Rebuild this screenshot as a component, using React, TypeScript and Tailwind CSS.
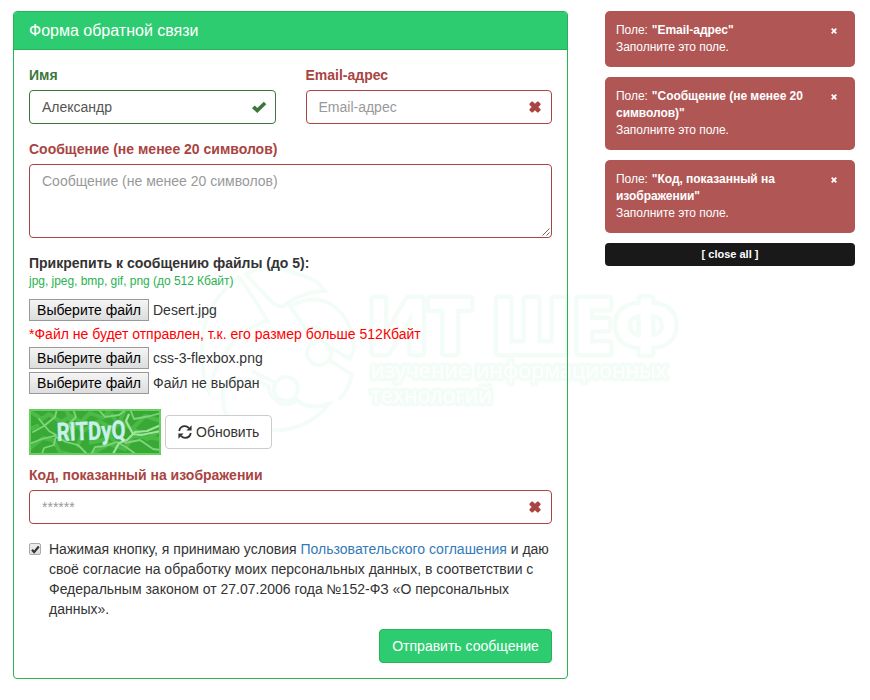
import type { ReactNode } from "react";

const CheckMark = () => (
  <svg className="h-[12px] w-[16px]" viewBox="0 0 16 12">
    <path d="M1 7.3 3.7 4.6 6.3 7.1 12.8.8 15.3 3.2 6.3 11.9Z" fill="#3c763d" />
  </svg>
);

const Cross = ({ className }: { className: string }) => (
  <svg className={className} viewBox="0 0 12 12">
    <path
      d="M2.7.4h1L6 2.7 8.3.4h1l2.3 2.3v1L9.3 6l2.3 2.3v1l-2.3 2.3h-1L6 9.3l-2.3 2.3h-1L.4 9.3v-1L2.7 6 .4 3.7v-1Z"
      fill="currentColor"
    />
  </svg>
);

const Refresh = () => (
  <svg className="h-[14px] w-[14px]" viewBox="0 0 14 14" fill="none" stroke="#333" strokeWidth="1.8">
    <path d="M1.2 6C1.8 3.1 4 1.2 6.8 1.2c1.7 0 3.1.7 4.2 1.9" />
    <path d="M12.8 8c-.6 2.9-2.8 4.8-5.6 4.8-1.7 0-3.1-.7-4.2-1.9" />
    <path d="M13.6.2v5.2H8.4ZM.4 13.8V8.6h5.2Z" fill="#333" stroke="none" />
  </svg>
);

const Captcha = () => (
  <svg className="h-[46px] w-[132px] shrink-0" viewBox="0 0 132 46">
    <defs>
      <filter id="soft">
        <feGaussianBlur stdDeviation=".6" />
      </filter>
    </defs>
    <rect width="132" height="46" fill="#38a935" />
    <g fill="none" strokeLinejoin="round" filter="url(#soft)">
      <g stroke="#56c251" strokeWidth="4" opacity=".7">
        <path d="M0 2 13 10 20 5 32 13 42 7 52 13 61 4 74 9 82 0M0 40 14 29 24 31 31 43 43 46M96 0 91 12 103 20 116 7 132 12M62 45 80 35 96 40 104 27 132 30M37 0 45 20 34 32M82 4 89 16 78 24 86 33" />
        <path d="M45 14 54 22 70 12 84 20 78 30 60 34M104 20 118 30 130 22M48 38 52 28M2 20 10 16" />
      </g>
      <g stroke="#80d57b" strokeWidth="1.8" strokeLinecap="round">
        <path d="M10 10 20 22 27 26 25 36 15 39 13 45M0 35 13 30 25 27 37 33 49 36 58 45M28 0 26 8 15 17 4 23M44 0 47 8 40 15 43 24M69 0 76 8 90 6 98 0M101 0 105 10 121 7 132 4M96 34 111 31 124 40 132 41M76 37 88 33 97 38 108 46M62 46 66 38 76 37" />
      </g>
      <path d="M132 16 118 22 106 23 98 31 90 34 84 45M132 22 112 26 104 25 97 12 100 5" stroke="#a0e49c" strokeWidth="2.2" />
      <path d="M1 1h130v44H1Z" stroke="#67cf62" strokeWidth="2" />
    </g>
    <text transform="translate(28 32) rotate(-2) scale(.83 1.27)" fill="#c8f0ec" stroke="#c8f0ec" strokeWidth=".3" className="font-['Roboto',sans-serif] text-[20px] font-bold" textLength="83" lengthAdjust="spacingAndGlyphs">RITDyQ</text>
  </svg>
);

/* Faint logo behind the form and the page around it. */
const Watermark = () => (
  <svg className="pointer-events-none absolute top-[260px] left-[190px] -z-10 h-[190px] w-[510px]" viewBox="190 260 510 190" fill="none" stroke="#effcf5" strokeWidth="4" opacity=".7">
    <path d="M239 277c-20 15-34 35-36 60-2 22-1 40 6 55 4-22 14-40 29-54 10-9 20-15 29-17-6-13-15-25-28-44Z" />
    <path d="M246 274c14-8 30-7 42-3 17 5 29 8 37 20-16 1-31 6-41 15-5 2-10-2-14-6-7-8-17-17-24-26Z" />
    <path d="M290 306c16-8 32-9 44 0 13 10 19 24 20 43l-4 10-24-14c1-16-10-20-20-15-5-9-10-15-16-24Z" />
    <path d="M224 383c-3 17 0 32 8 43 14 5 31 5 50 4 22-3 36-12 47-26-13 4-25 3-32-4-7 6-16 5-21 0-6-5-8-9-7-14-12-6-29-10-45-3Z" />
    <circle cx="319" cy="353" r="12" />
    <circle cx="286" cy="389" r="12" />
    <path d="m330 361 22 13c-2 10-6 18-13 26M276 383l-24-12" />
    <g strokeWidth="9" strokeLinejoin="round" className="font-['Open_Sans',sans-serif] font-bold">
      <text x="367" y="353" fontSize="76" textLength="311" lengthAdjust="spacingAndGlyphs" fill="#fff" style={{ paintOrder: "stroke" }}>ИТ ШЕФ</text>
    </g>
    <g strokeWidth="7" strokeLinejoin="round" fill="#fff" className="font-['Open_Sans',sans-serif]" style={{ paintOrder: "stroke" }}>
      <text x="371" y="378" fontSize="22" textLength="296" lengthAdjust="spacingAndGlyphs">изучение информационных</text>
      <text x="371" y="403" fontSize="22" textLength="121" lengthAdjust="spacingAndGlyphs">технологий</text>
    </g>
  </svg>
);

const Label = ({ children, good }: { children: ReactNode; good?: boolean }) => (
  <div className={`mb-[5px] h-5 font-bold ${good ? "text-[#3c763d]" : "text-[#a94442]"}`}>{children}</div>
);

const Field = ({ children, good }: { children: ReactNode; good?: boolean }) => (
  <div className={`flex h-[34px] items-center justify-between rounded-[4px] border pl-3 ${good ? "border-[#3c763d] pr-[8px] text-[#555]" : "border-[#a94442] pr-[10px] text-[#999]"}`}>
    {children}
    {good ? <CheckMark /> : <Cross className="h-3 w-3 text-[#a94442]" />}
  </div>
);

const FileRow = ({ name }: { name: string }) => (
  <div className="flex h-[22px] items-center gap-1">
    <button className="h-[22px] w-[120px] border border-[#999] bg-linear-to-b from-[#f5f5f5] to-[#dddddd] whitespace-nowrap text-black">Выберите файл</button>
    <span>{name}</span>
  </div>
);

const Notice = ({ lines }: { lines: string[] }) => (
  <div className="flex justify-between rounded-[5px] bg-[#b05655] pt-[11px] pr-[18px] pb-[11px] pl-[11px] text-[12px] leading-[17px] tracking-[-0.04px] text-white">
    <div className="flex flex-col whitespace-nowrap">
      <div className="flex gap-1">
        <span>Поле:</span>
        <b>{lines[0]}</b>
      </div>
      {lines[1] && <b>{lines[1]}</b>}
      <span>Заполните это поле.</span>
    </div>
    <svg className="mt-[6px] h-[6px] w-[6px]" viewBox="0 0 6 6">
      <path d="m.7.7 4.6 4.6M5.3.7.7 5.3" stroke="#fff" strokeWidth="1.7" />
    </svg>
  </div>
);

export default function App() {
  return (
    <div className="relative isolate flex h-[700px] w-[870px] items-start gap-[37px] overflow-hidden bg-white pt-[11px] pl-[13px] font-['Liberation_Sans',Arial,sans-serif] text-[14px] leading-5 text-[#333]">
      <Watermark />
      <main className="h-[668px] w-[555px] shrink-0 rounded-[4px] border border-[#28b351]">
        <h1 className="flex h-[38px] items-center rounded-t-[3px] border-b border-[#28b351] bg-[#2ecc71] pl-[15px] text-[16px] text-white">Форма обратной связи</h1>
        <div className="px-[15px] pt-[15px]">
          <div className="mb-[15px] flex gap-[30px]">
            <div className="flex-1">
              <Label good>Имя</Label>
              <Field good>Александр</Field>
            </div>
            <div className="flex-1">
              <Label>Email-адрес</Label>
              <Field>Email-адрес</Field>
            </div>
          </div>
          <Label>Сообщение (не менее 20 символов)</Label>
          <div className="mb-[15px] flex h-[74px] justify-between rounded-[4px] border border-[#a94442] pt-[6px] pl-3 text-[#999]">
            Сообщение (не менее 20 символов)
            <svg className="mr-px mb-px h-[8px] w-[8px] self-end" viewBox="0 0 8 8" stroke="#555" strokeWidth=".9">
              <path d="M.5 7.5 7.5.5M4.5 7.5l3-3" />
            </svg>
          </div>
          <div className="font-bold">Прикрепить к сообщению файлы (до 5):</div>
          <div className="mb-[9px] text-[12px] leading-[17px] tracking-[-0.03px] text-[#28b351]">jpg, jpeg, bmp, gif, png (до 512 Кбайт)</div>
          <FileRow name="Desert.jpg" />
          <div className="my-[3px] text-[#f00]">*Файл не будет отправлен, т.к. его размер больше 512Кбайт</div>
          <div className="flex flex-col gap-[3px]">
            <FileRow name="css-3-flexbox.png" />
            <FileRow name="Файл не выбран" />
          </div>
          <div className="mt-[15px] mb-[10px] flex items-center gap-1">
            <Captcha />
            <button className="flex h-[34px] w-[107px] items-center gap-1 rounded-[4px] border border-[#ccc] bg-white pl-3">
              <Refresh />
              <span>Обновить</span>
            </button>
          </div>
          <Label>Код, показанный на изображении</Label>
          <Field>******</Field>
          <div className="mt-[15px] mb-[10px] flex gap-2">
            <span className="mt-1 flex h-3 w-3 shrink-0 items-center justify-center rounded-[2px] border border-[#aaa] bg-linear-to-b from-[#eee] to-[#ddd]">
              <svg className="h-[9px] w-[9px]" viewBox="0 0 9 9">
                <path d="m1 4.8 2.1 2.3L7.8 1.5" fill="none" stroke="#333" strokeWidth="2.1" />
              </svg>
            </span>
            <p className="whitespace-nowrap">
              Нажимая кнопку, я принимаю условия <a className="text-[#337ab7]">Пользовательского соглашения</a> и даю
              <br />
              своё согласие на обработку моих персональных данных, в соответствии с
              <br />
              Федеральным законом от 27.07.2006 года №152-ФЗ «О персональных
              <br />
              данных».
            </p>
          </div>
          <button className="ml-auto flex h-[34px] w-[173px] items-center justify-center rounded-[4px] border border-[#28b351] bg-[#2ecc71] whitespace-nowrap text-white">Отправить сообщение</button>
        </div>
      </main>
      <aside className="flex w-[250px] shrink-0 flex-col gap-[10px]">
        <Notice lines={['"Email-адрес"']} />
        <Notice lines={['"Сообщение (не менее 20', 'символов)"']} />
        <Notice lines={['"Код, показанный на', 'изображении"']} />
        <div className="h-[23px] rounded-[4px] bg-[#191919] text-center text-[11px] leading-[23px] font-bold text-white">[ close all ]</div>
      </aside>
    </div>
  );
}
